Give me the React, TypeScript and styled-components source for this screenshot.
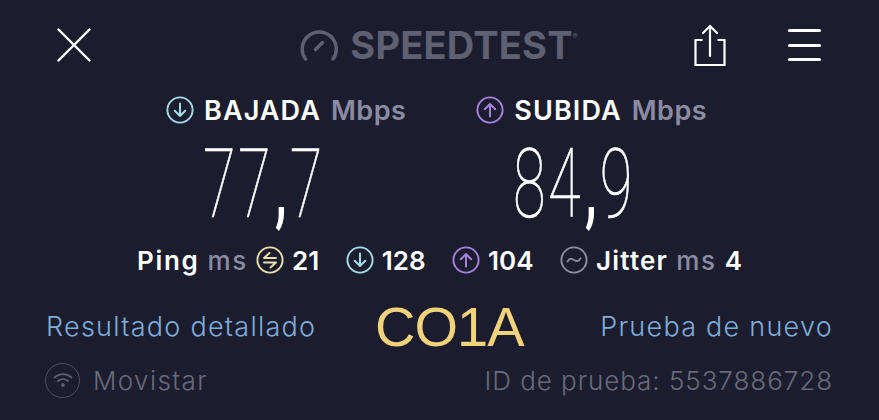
import React from 'react'
import styled, { createGlobalStyle } from 'styled-components'

const GlobalStyle = createGlobalStyle`
  html, body {
    margin: 0;
    padding: 0;
    background: #1b1c2d;
  }
`

const Ring = ({ color, children }: { color: string; children: React.ReactNode }) => (
  <svg width="28" height="28" viewBox="0 0 28 28" fill="none" stroke={color} strokeLinecap="round" strokeLinejoin="round">
    <circle cx="14" cy="14" r="12.6" strokeWidth="1.9" />
    {children}
  </svg>
)

const DownIcon = () => (
  <Ring color="#a5dde6">
    <path d="M14 7.500v12.500M8.800 14.800l5.200 5.200 5.200-5.200" strokeWidth="2" />
  </Ring>
)

const UpIcon = () => (
  <Ring color="#a683e0">
    <path d="M14 20.500V8M8.800 13.200L14 8l5.200 5.200" strokeWidth="2" />
  </Ring>
)

const PingIcon = () => (
  <Ring color="#ebe2ab">
    <path d="M20 12H8l5.500-5M8 16.500h12L14.500 21.500" strokeWidth="1.900" />
  </Ring>
)

const JitterIcon = () => (
  <Ring color="#8c8fa3">
    <path d="M7.500 15.500c1.600-3 3.700-3.400 6.500-1.600s4.900 1.400 6.500-1.600" strokeWidth="1.800" />
  </Ring>
)

const Speed = ({ whole, decimal }: { whole: string; decimal: string }) => (
  <BigNumber>
    {whole}
    <Comma>,</Comma>
    {decimal}
  </BigNumber>
)

const App = () => (
  <>
    <GlobalStyle />
    <Screen>
      <Header>
        <svg width="34" height="34" viewBox="0 0 34 34" stroke="#fff" strokeWidth="2.400" strokeLinecap="round">
          <path d="M1.500 1.500l31 31M32.500 1.500l-31 31" />
        </svg>
        <Logo>
          <svg width="38" height="34" viewBox="0 0 38 34" fill="none" stroke="#5f6072" strokeWidth="3.400" strokeLinecap="round">
            <path d="M5.500 31A17 17 0 1 1 33 31" />
            <path d="M15.500 21.500l7-7" />
          </svg>
          <LogoText>SPEEDTEST<LogoMark>®</LogoMark></LogoText>
        </Logo>
        <HeaderActions>
          <svg width="34" height="42" viewBox="0 0 34 42" fill="none" stroke="#fff" strokeWidth="2.200" strokeLinecap="round">
            <path d="M17 32V2M10 9l7-7 7 7" />
            <path d="M9.500 16H2.500V41H31.500V16H24.500" strokeLinecap="butt" />
          </svg>
          <MenuIcon>
            <MenuLine />
            <MenuLine />
            <MenuLine />
          </MenuIcon>
        </HeaderActions>
      </Header>

      <Speeds>
        <SpeedColumn>
          <SpeedLabel>
            <DownIcon />
            <HeadLabel>BAJADA</HeadLabel>
            <HeadUnit>Mbps</HeadUnit>
          </SpeedLabel>
          <Speed whole="77" decimal="7" />
        </SpeedColumn>
        <SpeedColumn>
          <SpeedLabel>
            <UpIcon />
            <HeadLabel>SUBIDA</HeadLabel>
            <HeadUnit>Mbps</HeadUnit>
          </SpeedLabel>
          <Speed whole="84" decimal="9" />
        </SpeedColumn>
      </Speeds>

      <Stats>
        <Stat>
          <Strong $spacing={1.700}>Ping</Strong>
          <Muted>ms</Muted>
          <PingIcon />
          <Strong $spacing={0}>21</Strong>
        </Stat>
        <Stat>
          <DownIcon />
          <Strong $spacing={0}>128</Strong>
        </Stat>
        <Stat>
          <UpIcon />
          <Strong $spacing={0}>104</Strong>
        </Stat>
        <Stat>
          <JitterIcon />
          <Strong $spacing={1.200}>Jitter</Strong>
          <Muted>ms</Muted>
          <Strong $spacing={0}>4</Strong>
        </Stat>
      </Stats>

      <ResultRow>
        <ActionLink>Resultado detallado</ActionLink>
        <Grade>CO1A</Grade>
        <ActionLink>Prueba de nuevo</ActionLink>
      </ResultRow>

      <FooterRow>
        <Provider>
          <WifiBadge>
            <svg width="20" height="16" viewBox="0 0 20 16" fill="none" stroke="#5d5e6f" strokeWidth="1.800" strokeLinecap="round">
              <path d="M1.500 5.500C6.500 1 13.500 1 18.500 5.500M5 9c3-2.600 7-2.600 10 0" />
              <circle cx="10" cy="13" r="1" fill="#5d5e6f" />
            </svg>
          </WifiBadge>
          <FooterText $spacing={1.400}>Movistar</FooterText>
        </Provider>
        <FooterText $spacing={0.950}>ID de prueba: 5537886728</FooterText>
      </FooterRow>
    </Screen>
  </>
)

export default App

const Screen = styled.div`
  width: 879px;
  height: 420px;
  overflow: hidden;
  background: #1b1c2d;
  font-family: Inter, 'Noto Sans', sans-serif;
  color: #fff;
`

const Header = styled.header`
  display: grid;
  grid-template-columns: 1fr auto 1fr;
  align-items: center;
  height: 42px;
  padding: 24px 58px 0 57px;
`

const Logo = styled.div`
  display: flex;
  align-items: center;
  gap: 12px;
`

const LogoText = styled.span`
  font-size: 38px;
  font-weight: 700;
  color: #5f6072;
  letter-spacing: 0.2px;
  line-height: 42px;
`

const LogoMark = styled.sup`
  font-size: 7px;
  font-weight: 400;
  line-height: 0;
  vertical-align: 20px;
`

const HeaderActions = styled.div`
  display: flex;
  align-items: center;
  justify-content: flex-end;
  gap: 61px;
`

const MenuIcon = styled.div`
  display: flex;
  flex-direction: column;
  gap: 11.500px;
  width: 33px;
`

const MenuLine = styled.span`
  height: 3px;
  border-radius: 2px;
  background: #fff;
`

const Speeds = styled.section`
  display: flex;
  padding: 29px 0 0 166px;
  gap: 70px;
`

const SpeedColumn = styled.div`
  display: flex;
  flex-direction: column;
  align-items: flex-start;
`

const SpeedLabel = styled.div`
  display: flex;
  align-items: center;
  gap: 10px;
  height: 30px;
`

const HeadLabel = styled.span`
  font-size: 27px;
  font-weight: 600;
  letter-spacing: 1.100px;
`

const HeadUnit = styled.span`
  font-size: 27px;
  font-weight: 600;
  color: #8b8ca3;
  letter-spacing: 0.500px;
`

const Strong = styled.span<{ $spacing: number }>`
  font-size: 26px;
  font-weight: 600;
  color: #fff;
  letter-spacing: ${({ $spacing }) => $spacing}px;
`

const Muted = styled.span`
  font-size: 26px;
  font-weight: 500;
  color: #8b8ca3;
  letter-spacing: 1.700px;
`

const BigNumber = styled.div`
  width: 0;
  white-space: nowrap;
  font-family: Roboto, sans-serif;
  font-weight: 100;
  font-size: 96px;
  line-height: 98px;
  letter-spacing: 4px;
  margin: 10px 0 0 37px;
  transform-origin: left center;
  transform: scaleX(0.62);
  -webkit-text-stroke: 0.6px #fff;
`

const Comma = styled.span`
  font-weight: 400;
  -webkit-text-stroke: 0;
  margin: 0 1px 0 3px;
`

const Stats = styled.section`
  display: flex;
  align-items: center;
  justify-content: center;
  gap: 26.500px;
  margin-top: 12px;
  height: 30px;
`

const Stat = styled.div`
  display: flex;
  align-items: center;
  gap: 8px;
`

const ResultRow = styled.section`
  display: flex;
  align-items: center;
  justify-content: space-between;
  padding: 0 46px;
  margin-top: 23px;
  height: 56px;
`

const ActionLink = styled.span`
  font-size: 27px;
  font-weight: 300;
  color: #7eaedb;
  letter-spacing: 1.250px;
`

const Grade = styled.span`
  font-family: 'Liberation Sans', sans-serif;
  font-size: 56px;
  letter-spacing: -1px;
  color: #f2d27a;
  padding-right: 18px;
`

const FooterRow = styled.footer`
  display: flex;
  align-items: center;
  justify-content: space-between;
  padding: 0 46px 0 45px;
  margin-top: 6px;
  height: 40px;
`

const Provider = styled.div`
  display: flex;
  align-items: center;
  gap: 13px;
`

const WifiBadge = styled.div`
  display: flex;
  align-items: center;
  justify-content: center;
  width: 35px;
  height: 35px;
  border: 1.500px solid #4f5062;
  border-radius: 50%;
  box-sizing: border-box;
`

const FooterText = styled.span<{ $spacing: number }>`
  font-size: 26px;
  font-weight: 300;
  color: #686a7c;
  letter-spacing: ${({ $spacing }) => $spacing}px;
`
